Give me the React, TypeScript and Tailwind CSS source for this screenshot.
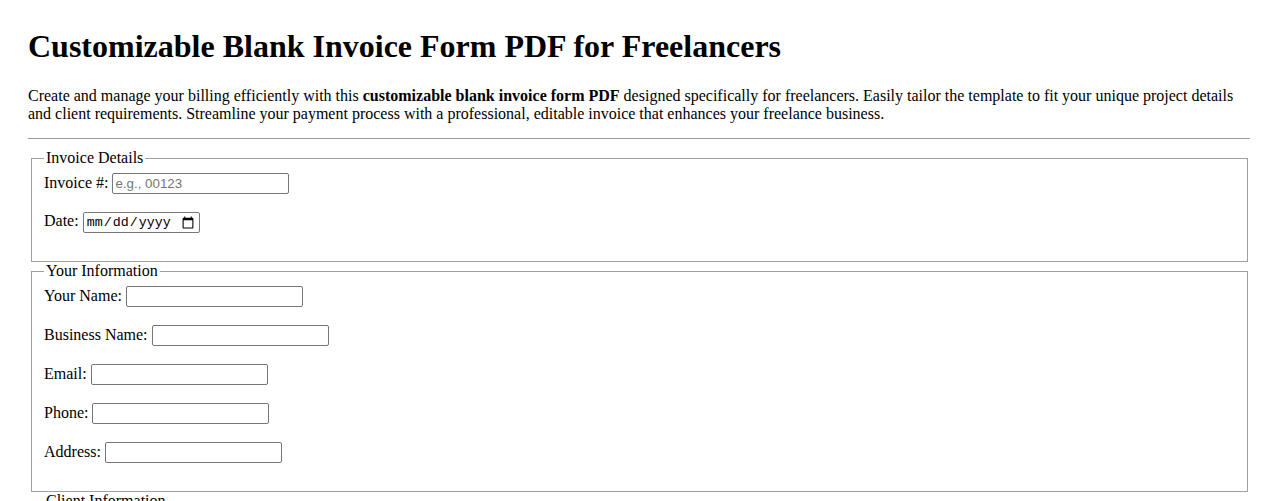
import React from "react";

type Field = { id: string; label: string; type?: string; placeholder?: string };

const sections: { title: string; fields: Field[] }[] = [
  {
    title: "Invoice Details",
    fields: [
      { id: "invoice", label: "Invoice #:", placeholder: "e.g., 00123" },
      { id: "date", label: "Date:", type: "date" },
    ],
  },
  {
    title: "Your Information",
    fields: [
      { id: "name", label: "Your Name:" },
      { id: "business", label: "Business Name:" },
      { id: "email", label: "Email:", type: "email" },
      { id: "phone", label: "Phone:", type: "tel" },
      { id: "address", label: "Address:" },
    ],
  },
  {
    title: "Client Information",
    fields: [
      { id: "client", label: "Client Name:" },
      { id: "company", label: "Company:" },
      { id: "client-email", label: "Email:", type: "email" },
      { id: "client-address", label: "Address:" },
    ],
  },
];

const textInput =
  "h-[21px] w-[177px] rounded-[2px] border border-[#767676] bg-white px-[2px] align-baseline font-['Liberation_Sans',Arial,sans-serif] text-[13.333px] text-black placeholder:text-[#757575]";
const dateInput =
  "h-[21px] w-[117px] rounded-[2px] border border-[#767676] bg-white px-[2px] align-baseline font-['Liberation_Mono','DejaVu_Sans_Mono',monospace] text-[13.333px] text-black";

function Section({ title, fields }: { title: string; fields: Field[] }) {
  return (
    <fieldset className="ml-[3px] mr-[2px] border border-[#a0a0a0] px-[12px] pt-[6px] pb-[10px]">
      <legend className="px-[2px]">{title}</legend>
      {fields.map((f) => (
        <div key={f.id} className="mb-[18px] h-[21px]">
          <label htmlFor={f.id}>{f.label}</label>{" "}
          <input
            id={f.id}
            type={f.type ?? "text"}
            placeholder={f.placeholder}
            className={f.type === "date" ? dateInput : textInput}
          />
        </div>
      ))}
    </fieldset>
  );
}

export default function App() {
  return (
    <div className="h-[501px] overflow-hidden bg-white px-[28px] pt-[28px] font-['Liberation_Serif','Times_New_Roman',serif] text-[16px] leading-[normal] text-black">
      <h1 className="text-[32px] font-bold">Customizable Blank Invoice Form PDF for Freelancers</h1>
      <p className="mt-[22px]">
        Create and manage your billing efficiently with this <strong>customizable blank invoice form PDF</strong>{" "}
        designed specifically for freelancers. Easily tailor the template to fit your unique project details and client
        requirements. Streamline your payment process with a professional, editable invoice that enhances your freelance
        business.
      </p>
      <hr className="mt-[15px] mb-[10px] border-t border-[#9a9a9a]" />
      <form>
        {sections.map((s) => (
          <Section key={s.title} title={s.title} fields={s.fields} />
        ))}
      </form>
    </div>
  );
}
